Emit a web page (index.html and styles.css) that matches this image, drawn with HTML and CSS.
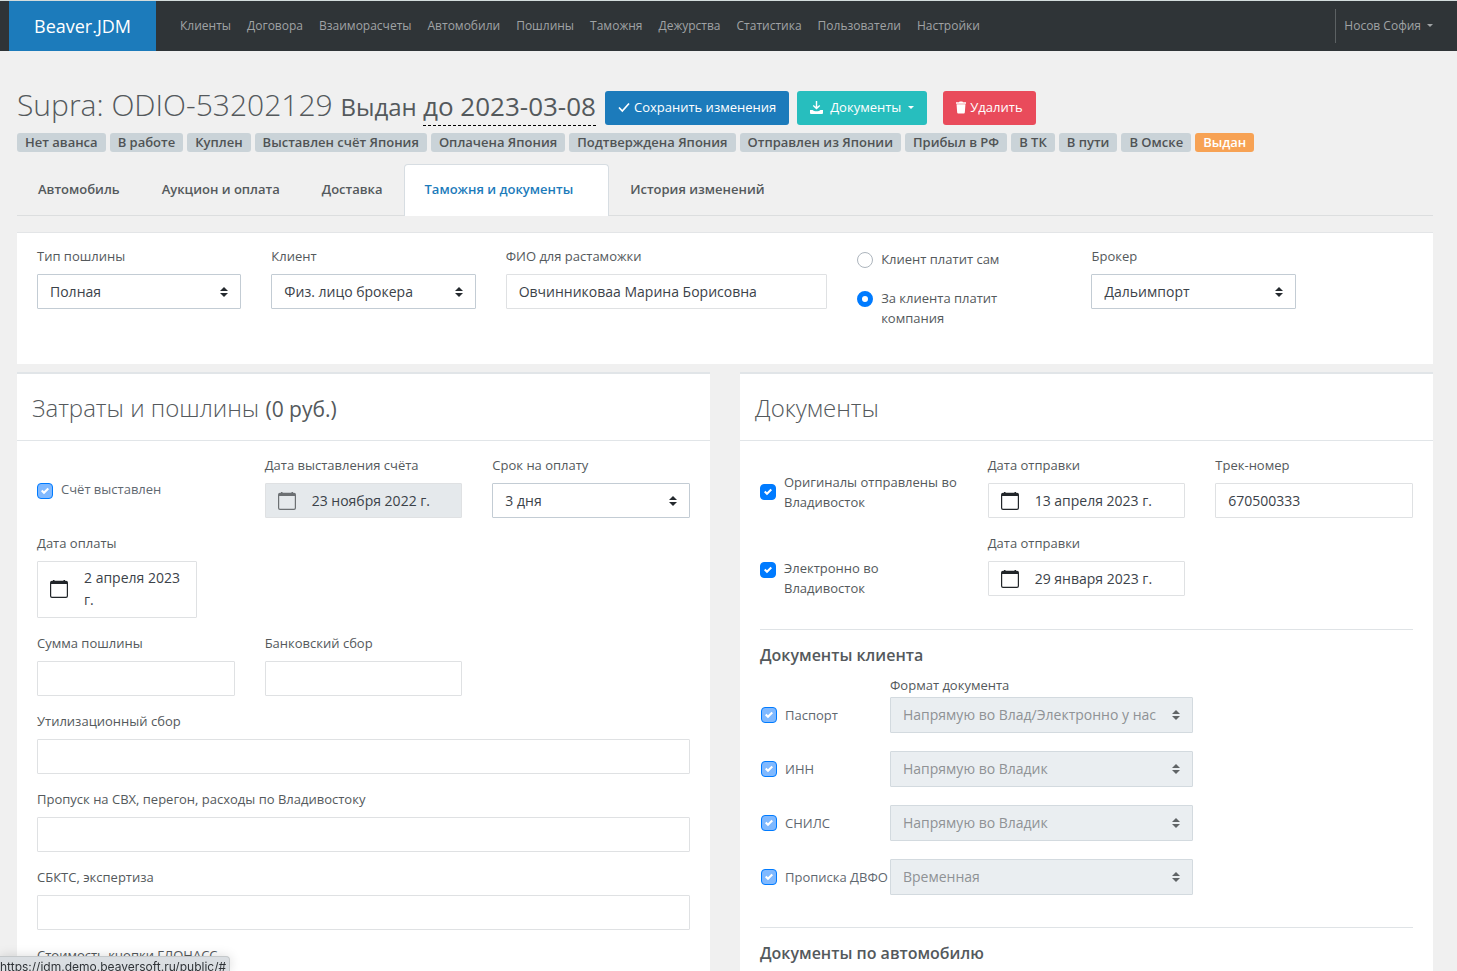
FILE: index.html
```html
<!DOCTYPE html>
<html lang="ru">
<head>
<meta charset="utf-8">
<meta name="viewport" content="width=device-width, initial-scale=1">
<title>Beaver.JDM</title>
<link rel="stylesheet" href="styles.css">
</head>
<body>
<svg class="sprite" aria-hidden="true">
  <symbol id="calendar" viewBox="0 0 18 18"><path fill-rule="evenodd" d="M3 0h1.500v.8h9V0H15v.8h1a2 2 0 0 1 2 2V16a2 2 0 0 1-2 2H2a2 2 0 0 1-2-2V2.800a2 2 0 0 1 2-2h1zM1.200 4v12q0 .8.8.8h14q.8 0 .8-.8V4z"/></symbol>
</svg>
<div class="page">
  <header class="navbar">
    <a class="brand" href="#">Beaver.JDM</a>
    <nav class="menu">
      <a href="#">Клиенты</a><a href="#">Договора</a><a href="#">Взаиморасчеты</a><a href="#">Автомобили</a><a href="#">Пошлины</a><a href="#">Таможня</a><a href="#">Дежурства</a><a href="#">Статистика</a><a href="#">Пользователи</a><a href="#">Настройки</a>
    </nav>
    <button class="user caret" type="button">Носов София</button>
  </header>

  <main class="content">
    <div class="heading">
      <h1 class="title">Supra: ODIO-53202129 <span class="state">Выдан </span><a class="until" href="#">до 2023-03-08</a></h1>
      <div class="actions">
        <button class="btn btn-save" type="button"><svg width="12" height="12" viewBox="0 0 12 12"><path d="M1 6.500 4.300 10 11 2.500" fill="none" stroke="currentColor" stroke-width="1.700"/></svg>Сохранить изменения</button>
        <button class="btn btn-docs caret" type="button"><svg width="13" height="13" viewBox="0 0 13 13" fill="currentColor"><path d="M5.800 0h1.400v5.800L9.400 4l.8 1.100L6.500 8.600 2.800 5.100 3.600 4l2.200 1.800zM0 9h2.600c1.200 1.700 6.600 1.700 7.800 0H13v3q0 1-1 1H1q-1 0-1-1z"/></svg>Документы</button>
        <button class="btn btn-delete" type="button"><svg width="10" height="13" viewBox="0 0 11 13" fill="currentColor"><path d="M0 .8h3.300L4 0h3l.7.8H11v1.500H0zM.6 3h9.800L9.700 12q-.1 1-1 1H2.300q-.9 0-1-1z"/></svg>Удалить</button>
      </div>
    </div>

    <div class="badges">
      <span class="badge">Нет аванса</span><span class="badge">В работе</span><span class="badge">Куплен</span><span class="badge">Выставлен счёт Япония</span><span class="badge">Оплачена Япония</span><span class="badge">Подтверждена Япония</span><span class="badge">Отправлен из Японии</span><span class="badge">Прибыл в РФ</span><span class="badge">В ТК</span><span class="badge">В пути</span><span class="badge">В Омске</span><span class="badge badge-current">Выдан</span>
    </div>

    <nav class="tabs">
      <a class="tab" href="#">Автомобиль</a><a class="tab" href="#">Аукцион и оплата</a><a class="tab" href="#">Доставка</a><a class="tab tab-active" href="#">Таможня и документы</a><a class="tab" href="#">История изменений</a>
    </nav>

    <section class="filter">
      <div class="field span-2"><label for="duty">Тип пошлины</label><select id="duty"><option>Полная</option></select></div>
      <div class="field span-2"><label for="client">Клиент</label><select id="client"><option>Физ. лицо брокера</option></select></div>
      <div class="field span-3"><label for="fio">ФИО для растаможки</label><input class="text" id="fio" type="text" value="Овчинниковаа Марина Борисовна"></div>
      <div class="radios span-2">
        <label class="option"><input type="radio" name="payer"><span>Клиент платит сам</span></label>
        <label class="option"><input type="radio" name="payer" checked><span>За клиента платит компания</span></label>
      </div>
      <div class="field span-2"><label for="broker">Брокер</label><select id="broker"><option>Дальимпорт</option></select></div>
    </section>

    <div class="panels">
      <section class="panel">
        <h2 class="panel-title">Затраты и пошлины <small>(0 руб.)</small></h2>
        <div class="panel-body">
          <div class="row">
            <label class="check check-single muted"><input type="checkbox" checked disabled><span>Счёт выставлен</span></label>
            <div class="field"><label for="d1">Дата выставления счёта</label><div class="date date-disabled"><button id="d1" type="button" disabled aria-label="Календарь"><svg><use href="#calendar"/></svg></button><span>23 ноября 2022 г.</span></div></div>
            <div class="field"><label for="term">Срок на оплату</label><select id="term"><option>3 дня</option></select></div>
          </div>
          <div class="row">
            <div class="field"><label for="d2">Дата оплаты</label><div class="date date-narrow"><button id="d2" type="button" aria-label="Календарь"><svg><use href="#calendar"/></svg></button><span>2 апреля 2023 г.</span></div></div>
          </div>
          <div class="row">
            <div class="field"><label for="sum">Сумма пошлины</label><input class="text" id="sum" type="text"></div>
            <div class="field"><label for="bank">Банковский сбор</label><input class="text" id="bank" type="text"></div>
          </div>
          <div class="field"><label for="util">Утилизационный сбор</label><input class="text" id="util" type="text"></div>
          <div class="field"><label for="svh">Пропуск на СВХ, перегон, расходы по Владивостоку</label><input class="text" id="svh" type="text"></div>
          <div class="field"><label for="sbkts">СБКТС, экспертиза</label><input class="text" id="sbkts" type="text"></div>
          <div class="field"><label for="glonass">Стоимость кнопки ГЛОНАСС</label><input class="text" id="glonass" type="text"></div>
        </div>
      </section>

      <section class="panel">
        <h2 class="panel-title">Документы</h2>
        <div class="panel-body">
          <div class="row">
            <label class="check check-centered"><input type="checkbox" checked><span>Оригиналы отправлены во Владивосток</span></label>
            <div class="field"><label for="d3">Дата отправки</label><div class="date"><button id="d3" type="button" aria-label="Календарь"><svg><use href="#calendar"/></svg></button><span>13 апреля 2023 г.</span></div></div>
            <div class="field"><label for="track">Трек-номер</label><input class="text" id="track" type="text" value="670500333"></div>
          </div>
          <div class="row">
            <label class="check"><input type="checkbox" checked><span>Электронно во Владивосток</span></label>
            <div class="field"><label for="d4">Дата отправки</label><div class="date"><button id="d4" type="button" aria-label="Календарь"><svg><use href="#calendar"/></svg></button><span>29 января 2023 г.</span></div></div>
          </div>
          <hr>
          <h3 class="subtitle">Документы клиента</h3>
          <div class="docs">
            <label class="docs-caption" for="f1">Формат документа</label>
            <label class="doc muted"><input type="checkbox" checked disabled><span>Паспорт</span></label>
            <select id="f1" disabled><option>Напрямую во Влад/Электронно у нас</option></select>
            <label class="doc muted"><input type="checkbox" checked disabled><span>ИНН</span></label>
            <select aria-label="ИНН" disabled><option>Напрямую во Владик</option></select>
            <label class="doc muted"><input type="checkbox" checked disabled><span>СНИЛС</span></label>
            <select aria-label="СНИЛС" disabled><option>Напрямую во Владик</option></select>
            <label class="doc muted"><input type="checkbox" checked disabled><span>Прописка ДВФО</span></label>
            <select aria-label="Прописка ДВФО" disabled><option>Временная</option></select>
          </div>
          <hr>
          <h3 class="subtitle">Документы по автомобилю</h3>
        </div>
      </section>
    </div>
  </main>
  <div class="link-status">https://jdm.demo.beaversoft.ru/public/#</div>
</div>
</body>
</html>
```
FILE: styles.css
```css
* { box-sizing: border-box; }
body {
  margin: 0;
  background: #f0f0f0;
  color: #54595c;
  font: 400 13px/20px "Open Sans", "Noto Sans", sans-serif;
}
a { color: inherit; text-decoration: none; }
button, input, select { font-family: inherit; margin: 0; }
.sprite { display: none; }
.page { height: 100vh; overflow: hidden; }

/* Top bar */
.navbar {
  display: flex;
  align-items: center;
  height: 51px;
  padding: 0 24px 0 9px;
  border-top: 1px solid #d3dcdc;
  background: #2f3437;
  color: #a0a3a5;
}
.brand {
  padding: 0 25px;
  background: #1c7bbb;
  color: #fff;
  font-size: 18px;
  font-weight: 500;
  line-height: 50px;
}
.menu { display: flex; gap: 16px; margin-left: 24px; font-size: 12px; }
.user {
  margin-left: auto;
  height: 34px;
  padding: 0 0 2px 8px;
  border: 0;
  border-left: 1px solid #5c6163;
  background: none;
  color: inherit;
  font-size: 12px;
}
.caret::after {
  content: "";
  display: inline-block;
  margin-left: 6px;
  border: 3px solid transparent;
  border-top-color: currentColor;
  border-bottom: 0;
  vertical-align: 3px;
}

/* Page heading */
.content { padding: 34px 24px 0 17px; }
.heading { display: flex; align-items: flex-start; gap: 9px; }
.title { margin: 0; font-size: 30px; font-weight: 300; line-height: 40px; white-space: nowrap; }
.state { font-size: 24px; font-weight: 400; }
.until { padding-bottom: 1px; border-bottom: 1px dashed #000; font-size: 26px; font-weight: 400; }
.actions { display: flex; gap: 8px; margin-top: 6px; }
.btn {
  display: flex;
  align-items: center;
  height: 34px;
  padding: 0 13px 2px;
  border: 0;
  border-radius: 3px;
  color: #fff;
  font-size: 13px;
  font-weight: 500;
  gap: 4px;
}
.btn-save { background: #1c7bbb; }
.btn-docs { background: #27bebe; }
.btn-docs svg { margin-right: 3px; }
.btn-docs::after { margin-left: 3px; }
.btn-delete { margin-left: 8px; background: #e94b5b; }

.badges { display: flex; gap: 4px; margin-top: 6px; }
.badge {
  padding: 0 8px;
  border-radius: 3px;
  background: #cad3d8;
  color: #505355;
  font-weight: 600;
  line-height: 19px;
  white-space: nowrap;
}
.badge-current { background: #f7a254; color: #fff; }

.tabs { display: flex; margin-top: 12px; border-bottom: 1px solid #dcdedf; font-weight: 600; }
.tab {
  margin-bottom: -1px;
  padding: 14px 20px 17px;
  border: 1px solid transparent;
  border-bottom: 0;
  border-radius: 4px 4px 0 0;
}
.tab-active { padding-right: 35px; border-color: #d7dde2; background: #fff; color: #1c7bbb; }

/* Form controls */
.field > label { display: block; margin-bottom: 8px; }
.text, select, .date {
  display: block;
  width: 100%;
  min-height: 35px;
  border: 1px solid #dfe1e3;
  border-radius: 1px;
  background-color: #fff;
  color: #3b4249;
  font-size: 14px;
}
.text, select { height: 35px; padding: 0 12px 1px; }
select {
  appearance: none;
  padding-right: 28px;
  border-color: #c3ccd4;
  background: #fff url("data:image/svg+xml,%3Csvg xmlns='http://www.w3.org/2000/svg' viewBox='0 0 4 5'%3E%3Cpath fill='%23252a2f' d='M2 0L0 2h4zm0 5L0 3h4z'/%3E%3C/svg%3E") no-repeat right 12px center / 8px 10px;
}
select:disabled {
  border-color: #d3dadf;
  background-color: #eaeef1;
  background-image: url("data:image/svg+xml,%3Csvg xmlns='http://www.w3.org/2000/svg' viewBox='0 0 4 5'%3E%3Cpath fill='%23606466' d='M2 0L0 2h4zm0 5L0 3h4z'/%3E%3C/svg%3E");
  color: #8f9295;
  opacity: 1;
}
.date { display: flex; align-items: center; gap: 16px; padding: 5px 12px; line-height: 22px; }
.date button { flex: none; display: flex; padding: 0; border: 0; background: none; color: #212529; }
.date svg { width: 18px; height: 18px; fill: currentColor; }
.date-disabled { background: #e5e9ec; }
.date-disabled button { color: #6c7073; }
.date-narrow { width: 160px; padding-bottom: 6px; }

input[type="checkbox"], input[type="radio"] {
  appearance: none;
  flex: none;
  width: 16px;
  height: 16px;
  border: 1px solid #adb5bd;
  border-radius: 4px;
  background: #fff center / 8px 8px no-repeat;
}
input[type="radio"] { border-radius: 50%; }
input[type="radio"]:checked { border: 5px solid #007bff; }
input[type="checkbox"]:checked {
  border-color: #007bff;
  background-color: #007bff;
  background-image: url("data:image/svg+xml,%3Csvg xmlns='http://www.w3.org/2000/svg' viewBox='0 0 8 8'%3E%3Cpath fill='%23fff' d='M6.564.75l-3.59 3.612-1.538-1.550L0 4.260l2.974 2.990L8 2.193z'/%3E%3C/svg%3E");
}
input[type="checkbox"]:checked:disabled { background-color: #80b9ff; }
.muted { color: #5f6870; }

/* Filter strip */
.filter {
  display: grid;
  grid-template-columns: repeat(12, minmax(0, 1fr));
  column-gap: 30px;
  margin-top: 16px;
  padding: 13px 20px 36px;
  border-top: 1px solid #e3e5e7;
  background: #fff;
}
.span-2 { grid-column: span 2; }
.span-3 { grid-column: span 3; }
.radios { display: flex; flex-direction: column; gap: 19px; padding-top: 3px; }
.option { display: flex; gap: 8px; }
.option input { margin-top: 3px; }

/* Panels */
.panels { display: grid; grid-template-columns: repeat(2, minmax(0, 1fr)); gap: 30px; margin-top: 8px; }
.panel { border-top: 2px solid #e1e5e8; background: #fff; }
.panel-title {
  margin: 0;
  padding: 19px 15px 17px;
  border-bottom: 1px solid #e1e5e8;
  font-size: 24px;
  font-weight: 300;
  line-height: 30px;
}
.panel-title small { font-size: 21px; font-weight: 500; line-height: 1; }
.panel-body { padding: 14px 20px; }
.row { display: grid; grid-template-columns: repeat(3, minmax(0, 1fr)); column-gap: 30px; }
.row, .panel-body > .field { margin-bottom: 15px; }
.check { display: flex; align-items: flex-start; gap: 8px; padding-top: 25px; }
.check input { margin-top: 4px; }
.check-centered { align-items: center; align-self: start; padding-top: 17px; }
.check-centered input { margin-top: 0; }
.check-single { padding-top: 24px; }
hr { margin: 31px 0 15px; border: 0; border-top: 1px solid #dfe3e6; }
.subtitle { margin: 0; font-size: 16px; font-weight: 600; line-height: 20px; }
.docs { display: grid; grid-template-columns: 130px minmax(0, 303px); row-gap: 18px; align-items: center; margin: 10px 0 32px; }
.docs-caption { grid-column: 2; margin-bottom: -16px; }
.doc { display: flex; align-items: center; gap: 8px; padding-left: 1px; white-space: nowrap; }
.docs select { height: 36px; padding-bottom: 2px; }

/* Browser link status */
.link-status {
  position: fixed;
  left: 0;
  bottom: 0;
  height: 15px;
  padding-right: 3px;
  overflow: hidden;
  border: 1px solid #c4c8ca;
  border-width: 1px 1px 0 0;
  border-radius: 0 4px 0 0;
  background: #dadee2;
  box-shadow: 0 0 12px rgba(0, 0, 0, 0.15);
  color: #303438;
  font: 12px/19px Inter, "Liberation Sans", sans-serif;
}
```
